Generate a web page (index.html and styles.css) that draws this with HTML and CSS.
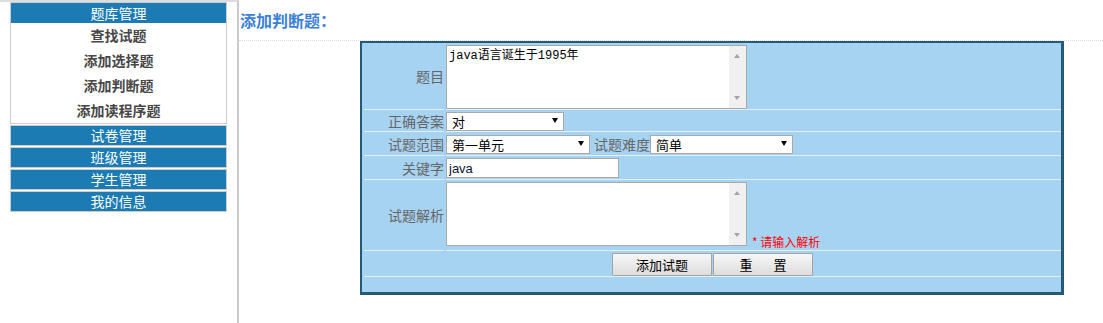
FILE: index.html
```html
<!DOCTYPE html>
<html lang="zh-CN">
<head>
<meta charset="utf-8">
<title>添加判断题</title>
<link rel="stylesheet" href="styles.css">
</head>
<body>
<div class="page">
  <aside class="sidebar">
    <div class="group">
      <div class="group-title">题库管理</div>
      <a class="item">查找试题</a>
      <a class="item">添加选择题</a>
      <a class="item">添加判断题</a>
      <a class="item">添加读程序题</a>
    </div>
    <div class="group"><div class="group-title group-title-closed">试卷管理</div></div>
    <div class="group"><div class="group-title group-title-closed">班级管理</div></div>
    <div class="group"><div class="group-title group-title-closed">学生管理</div></div>
    <div class="group"><div class="group-title group-title-closed">我的信息</div></div>
  </aside>
  <main class="main">
    <h2 class="page-title">添加判断题：</h2>
    <form class="form">
      <div class="label">题目</div>
      <div class="field field-flush">
        <span class="ta-wrap">
          <textarea class="textarea">java语言诞生于1995年</textarea>
          <span class="fake-scroll"></span>
        </span>
      </div>

      <div class="label">正确答案</div>
      <div class="field field-flush">
        <span class="select-wrap">
          <select class="select select-answer"><option>对</option><option>错</option></select>
        </span>
      </div>

      <div class="label">试题范围</div>
      <div class="field">
        <span class="select-wrap">
          <select class="select select-wide"><option>第一单元</option></select>
        </span>
        <span class="inline-label">试题难度</span>
        <span class="select-wrap">
          <select class="select select-wide select-level"><option>简单</option></select>
        </span>
      </div>

      <div class="label">关键字</div>
      <div class="field">
        <input class="input" type="text" value="java">
      </div>

      <div class="label">试题解析</div>
      <div class="field field-note">
        <span class="ta-wrap">
          <textarea class="textarea"></textarea>
          <span class="fake-scroll"></span>
        </span>
        <span class="note">* 请输入解析</span>
      </div>

      <div class="field field-actions">
        <button type="button" class="btn">添加试题</button>
        <button type="button" class="btn btn-reset"><span>重</span><span>置</span></button>
      </div>
    </form>
  </main>
</div>
</body>
</html>
```

FILE: styles.css
```css
html, body {
  margin: 0;
  padding: 0;
  background: #fff;
}

body {
  font-family: "Noto Sans CJK SC", "Liberation Sans", sans-serif;
  color: #333;
}

.page {
  display: flex;
  min-height: 100vh;
}

/* ---------- sidebar ---------- */
.sidebar {
  flex: none;
  width: 239px;
  box-sizing: border-box;
  border-top: 2px solid #ddd;
  border-right: 2px solid #ccc;
}

.group {
  width: 217px;
  margin-left: 10px;
  margin-bottom: 1px;
  box-sizing: border-box;
  border: 1px solid #ccc;
}

.group-title {
  height: 20px;
  line-height: 20px;
  background: #1c7bb3;
  color: #fff;
  font-size: 14px;
  text-align: center;
}

.group-title-closed {
  height: 19px;
  line-height: 19px;
}

.item {
  display: block;
  height: 25px;
  line-height: 25px;
  text-align: center;
  font-size: 14px;
  font-weight: bold;
  color: #474747;
  text-decoration: none;
}

/* ---------- main ---------- */
.main {
  flex: 1;
  min-width: 0;
}

.page-title {
  margin: 0;
  height: 41px;
  box-sizing: border-box;
  line-height: 40px;
  padding-left: 1px;
  border-bottom: 1px dotted #dcdcdc;
  font-size: 16px;
  font-weight: bold;
  color: #3c7fd7;
}

.form {
  margin: 0 0 0 121px;
  width: 704px;
  box-sizing: border-box;
  border-style: solid;
  border-color: #245a73;
  border-width: 2px 3px 3px 2px;
  background: #a7d3f3;
  padding: 0 0 15px 2px;
  display: grid;
  grid-template-columns: 80px 615px;
  column-gap: 2px;
}

.label {
  display: flex;
  align-items: center;
  justify-content: flex-end;
  font-size: 14px;
  color: #666;
  border-bottom: 1px solid #e4f0fa;
  white-space: nowrap;
}

.field {
  display: flex;
  align-items: center;
  padding: 2px 0 1px;
  border-bottom: 1px solid #e4f0fa;
}

.field-flush {
  padding-bottom: 0;
}

.field-note {
  align-items: flex-end;
  padding-bottom: 4px;
}

.field-actions {
  grid-column: 1 / -1;
  justify-content: center;
  gap: 1px;
  padding-bottom: 0;
}

/* textarea with drawn scrollbar */
.ta-wrap {
  position: relative;
  display: block;
  flex: none;
  width: 301px;
  height: 64px;
}

.textarea {
  display: block;
  width: 301px;
  height: 64px;
  box-sizing: border-box;
  margin: 0;
  padding: 3px 20px 2px 2px;
  border: 1px solid #a9a9a9;
  background: #fff;
  resize: none;
  overflow: hidden;
  font-family: "Liberation Mono", "Noto Sans CJK SC", monospace;
  font-size: 12px;
  line-height: 15px;
  color: #000;
}

.fake-scroll {
  position: absolute;
  top: 1px;
  right: 1px;
  bottom: 1px;
  width: 17px;
  background: #f0f0f0;
}

.fake-scroll::before,
.fake-scroll::after {
  content: "";
  position: absolute;
  left: 5px;
  border-left: 3.5px solid transparent;
  border-right: 3.5px solid transparent;
}

.fake-scroll::before {
  top: 8px;
  border-bottom: 4px solid #a3a3a3;
}

.fake-scroll::after {
  bottom: 8px;
  border-top: 4px solid #a3a3a3;
}

/* selects */
.select-wrap {
  position: relative;
  display: inline-block;
  flex: none;
  line-height: 0;
}

.select-wrap::after {
  content: "";
  position: absolute;
  top: 6px;
  right: 6px;
  border-left: 3.5px solid transparent;
  border-right: 3.5px solid transparent;
  border-top: 5px solid #000;
  pointer-events: none;
}

.select {
  -webkit-appearance: none;
  appearance: none;
  height: 19px;
  box-sizing: border-box;
  margin: 0;
  padding: 0 0 0 5px;
  border: 1px solid #a9a9a9;
  border-radius: 0;
  background: #fff;
  font-family: "Noto Sans CJK SC", sans-serif;
  font-size: 13px;
  line-height: 17px;
  color: #000;
}

.select-answer {
  width: 118px;
}

.select-wide {
  width: 144px;
}

.select-level {
  width: 143px;
}

.inline-label {
  margin-left: 4px;
  font-size: 14px;
  color: #666;
  white-space: nowrap;
}

.input {
  width: 173px;
  height: 20px;
  box-sizing: border-box;
  margin: 0;
  padding: 0 2px;
  border: 1px solid #a9a9a9;
  background: #fff;
  font-family: "Liberation Sans", sans-serif;
  font-size: 13px;
  color: #111133;
}

.note {
  margin-left: 5px;
  margin-bottom: -3px;
  font-size: 12px;
  line-height: 14px;
  color: #f00;
  white-space: nowrap;
}

.btn {
  width: 100px;
  height: 23px;
  box-sizing: border-box;
  margin: 0;
  padding: 0;
  border: 1px solid #a3a3a3;
  border-radius: 1px;
  background: linear-gradient(#f7f7f7, #dddddd);
  font-family: "Noto Sans CJK SC", sans-serif;
  font-size: 13px;
  line-height: 21px;
  color: #000;
}

.btn-reset {
  display: inline-flex;
  justify-content: center;
  align-items: center;
  gap: 21px;
}
```
